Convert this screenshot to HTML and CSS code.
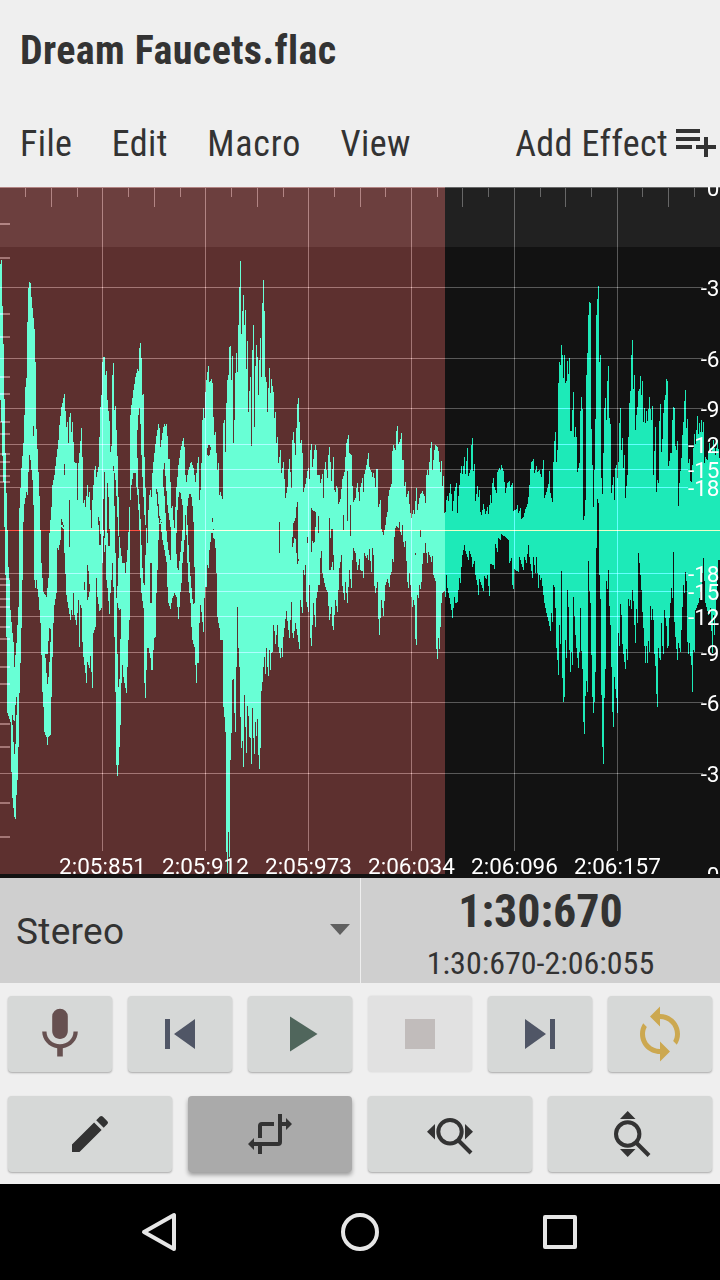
FILE: index.html
```
<!DOCTYPE html>
<html lang="en">
<head>
    <meta charset="UTF-8">
    <meta name="viewport" content="width=device-width, initial-scale=1.0">
    <title>Dream Faucets.flac</title>
    <link rel="stylesheet" href="styles.css">
</head>
<body>

    <header class="top">
        <h1 class="title">Dream Faucets.flac</h1>
        <nav class="menu">
            <button class="menu-item file">File</button>
            <button class="menu-item edit">Edit</button>
            <button class="menu-item macro">Macro</button>
            <button class="menu-item view">View</button>
            <button class="menu-item effect">Add Effect</button>
            <svg class="effect-icon" viewBox="0 0 48 48">
                <path d="M4 12h24v4H4zM4 20h24v4H4zM4 28h16v4H4zM36 28v-8h-4v8h-8v4h8v8h4v-8h8v-4z"/>
            </svg>
        </nav>
    </header>

    <svg class="wave" id="wave" viewBox="0 187 720 691">
        <rect class="ruler" x="0" y="187" width="720" height="60"/>
        <path class="samples" id="samples" fill-rule="evenodd"/>
        <rect class="selection" x="0" y="187" width="445" height="687"/>
        <g id="grid"></g>
        <rect class="zero" x="0" y="530" width="720" height="1"/>
        <g id="labels"></g>
        <rect class="wave-end" x="0" y="874" width="720" height="4"/>
    </svg>

    <section class="info">
        <div class="channel">
            <span>Stereo</span>
            <svg class="caret" viewBox="0 0 20 11"><path d="M0 0h20L10 11z"/></svg>
        </div>
        <div class="position">
            <div class="time">1:30:670</div>
            <div class="range">1:30:670-2:06:055</div>
        </div>
    </section>

    <section class="controls transport">
        <button class="btn record"><svg viewBox="0 0 60 60"><path d="M30 35c4.400 0 7.800-3.600 7.800-8V12.500a7.800 7.800 0 0 0-15.600 0V27c0 4.400 3.400 8 7.800 8zM43.500 27.500c0 7.500-6.300 12.700-13.500 12.700S16.500 35 16.500 27.500h-4.300c0 8.500 6.800 15.500 15 16.700V52.500h5.600V44.200C41 43 47.800 36 47.800 27.500z"/></svg></button>
        <button class="btn skip"><svg viewBox="0 0 60 60"><path d="M15 15h5v30h-5zM24 30l21 15V15z"/></svg></button>
        <button class="btn play"><svg viewBox="0 0 60 60"><path d="M20 12.500v35L47.500 30z"/></svg></button>
        <button class="btn stop" disabled><svg viewBox="0 0 60 60"><path d="M15 15h30v30H15z"/></svg></button>
        <button class="btn skip"><svg viewBox="0 0 60 60"><path d="M15 45l21-15-21-15zM40 15h5v30h-5z"/></svg></button>
        <button class="btn loop"><svg viewBox="0 0 60 60"><path d="M30 10V2.500L20 12.500 30 22.500V15c8.300 0 15 6.700 15 15 0 2.500-.6 4.900-1.800 7L46.800 40.700C48.800 37.600 50 33.900 50 30c0-11-9-20-20-20zM30 45c-8.300 0-15-6.700-15-15 0-2.500.6-4.900 1.800-7L13.200 19.300C11.200 22.400 10 26.100 10 30c0 11 9 20 20 20v7.500L40 47.500 30 37.500z"/></svg></button>
    </section>

    <section class="controls tools">
        <button class="btn"><svg viewBox="0 0 48 48"><path d="M6 34.500V42h7.500L35.600 19.900l-7.500-7.500zM41.400 14.100a2 2 0 0 0 0-2.800L36.700 6.600a2 2 0 0 0-2.800 0l-3.700 3.700 7.500 7.500z"/></svg></button>
        <button class="btn active"><svg viewBox="0 0 48 48"><path d="M12 28V16a4 4 0 0 1 4-4h12v4H16v12zM32 4h4v8h4V8l6 6-6 6v-4h-4v16a4 4 0 0 1-4 4H16v8h-4v-8H8v4l-6-6 6-6v4h24z"/></svg></button>
        <button class="btn"><svg class="zoom-icon" viewBox="0 0 48 48"><circle cx="24" cy="21.700" r="11.700"/><path class="handle" d="M32.500 30.500L45 43"/><path d="M9 14v15.500L1 21.700zM39 14v15.500l8-7.800z"/></svg></button>
        <button class="btn"><svg class="zoom-icon" viewBox="0 0 48 48"><circle cx="21.700" cy="24" r="11.700"/><path class="handle" d="M30.500 33L43 45.500"/><path d="M14 9h15.500L21.700 1zM14 39h15.500l-7.800 8z"/></svg></button>
    </section>

    <footer class="system-bar">
        <svg viewBox="0 0 48 48"><path d="M38 7v34L8 24z"/></svg>
        <svg viewBox="0 0 48 48"><circle cx="24" cy="24" r="17"/></svg>
        <svg viewBox="0 0 48 48"><path d="M9 9h30v30H9z"/></svg>
    </footer>

    <script src="wave.js"></script>
</body>
</html>
```
FILE: styles.css
```
* {
    box-sizing: border-box;
}

body {
    margin: 0;
    width: 720px;
    height: 1280px;
    display: flex;
    flex-direction: column;
    background: #efefef;
    color: #333;
    font-family: Roboto, sans-serif;
    overflow: hidden;
}

button {
    border: none;
    background: none;
    padding: 0;
    color: inherit;
    font-family: inherit;
}

.top {
    height: 187px;
    padding: 0 3px 0 20px;
}

.title {
    margin: 0;
    height: 100px;
    line-height: 101px;
    font-size: 40px;
    font-weight: bold;
    font-stretch: condensed;
    font-variant-ligatures: none;
    letter-spacing: 0.4px;
}

.menu {
    height: 87px;
    display: flex;
    align-items: center;
}

.menu-item {
    font-size: 36px;
    font-stretch: condensed;
    font-variant-ligatures: none;
    letter-spacing: 0.4px;
    margin-right: 39.5px;
    white-space: nowrap;
}

.macro {
    letter-spacing: 0.8px;
}

.effect {
    margin-left: auto;
    margin-right: 4px;
}

.effect-icon {
    width: 48px;
    height: 48px;
    flex: none;
    margin-right: -3px;
    margin-bottom: 5px;
    fill: #333;
}

.wave {
    display: block;
    width: 720px;
    height: 691px;
    flex: none;
    background: #121212;
    isolation: isolate;
    shape-rendering: crispEdges;
}

.ruler {
    fill: #212121;
}

.samples {
    fill: #1deab8;
}

.selection {
    fill: #4b1e1d;
    mix-blend-mode: plus-lighter;
}

.grid-line {
    fill: #464646;
    mix-blend-mode: plus-lighter;
}

.zero {
    fill: #d01e10;
    mix-blend-mode: plus-lighter;
}

.wave-label {
    fill: #fff;
    font-size: 22.5px;
}

.wave-end {
    fill: #121212;
}

.info {
    height: 105px;
    display: flex;
    gap: 1px;
}

.channel {
    width: 360px;
    background: #cfcfcf;
    display: flex;
    align-items: center;
    justify-content: space-between;
    padding: 2px 10px 0 16px;
    font-size: 37px;
    letter-spacing: 0.3px;
}

.caret {
    width: 20px;
    height: 11px;
    fill: #606060;
    margin-top: -4px;
}

.position {
    flex: 1;
    background: #cfcfcf;
    text-align: center;
    font-stretch: condensed;
}

.time {
    font-size: 46px;
    font-weight: bold;
    line-height: 54px;
    padding-top: 6px;
}

.range {
    font-size: 32px;
    line-height: 38px;
    padding-top: 6px;
}

.controls {
    display: flex;
    gap: 16px;
    padding: 13px 8px 0;
}

.transport {
    height: 100px;
}

.tools {
    height: 101px;
}

.btn {
    flex: 1;
    height: 76px;
    border-radius: 4px;
    background: #d6d8d7;
    box-shadow: 0 1px 2px rgba(0, 0, 0, 0.3);
    display: flex;
    align-items: center;
    justify-content: center;
}

.transport svg {
    width: 60px;
    height: 60px;
}

.tools svg {
    width: 48px;
    height: 48px;
    fill: #333;
}

.record {
    fill: #665050;
}

.skip {
    fill: #505666;
}

.play {
    fill: #50665c;
}

.stop {
    background: #e1e1e1;
    fill: #c1bcbb;
    box-shadow: 0 0 2px rgba(0, 0, 0, 0.12);
}

.loop {
    fill: #cca850;
}

.active {
    background: #aaa;
    box-shadow: 0 3px 4px rgba(0, 0, 0, 0.35);
}

.zoom-icon circle,
.handle {
    fill: none;
    stroke: #333;
    stroke-width: 4px;
}

.system-bar {
    flex: 1;
    background: #000;
    display: flex;
    align-items: center;
    justify-content: center;
    gap: 152px;
}

.system-bar svg {
    width: 48px;
    height: 48px;
    fill: none;
    stroke: #e6e6e6;
    stroke-width: 4px;
    stroke-linejoin: round;
}
```
FILE: wave.js
```
// Peaks are "x,y" pairs: x in thirds of a pixel from the block start, y in pixels
const upper = [
    [0, `0,264 3,260 6,306 9,344 12,399 15,453 18,493 21,530 24,567 27,580 30,610 36,633 42,650 43,667 48,643 54,607 57,508
        63,468 69,443 75,387 79,378 81,322 84,288 88,282 92,283 95,297 99,318 102,329 105,362 108,429 111,449 114,472 117,496 120,530
        124,563 130,592 138,597 145,578 148,533 153,507 156,485 162,475 168,457 174,440 178,425 183,407 190,398 193,394 198,427
        202,422 205,443 208,417 211,413 214,432 218,422 223,462 228,463 232,500 235,463 238,453 243,428 246,457 250,503 253,500
        256,507 262,485 265,497 269,492 272,510 275,528 278,500 283,470 286,466 289,477 294,467 298,437 301,407 304,395 307,362
        311,357 314,357 317,375 320,371 323,400 327,421 330,452 334,446 337,375 340,363 343,410 346,406 349,430 352,456 355,497
        358,537 361,548 366,563 372,563 376,573 381,550 384,532 388,507 390,415 394,405 400,390 407,377 412,369 415,371 418,348
        421,343 424,358 427,395 430,394 433,457 436,488 439,528 442,543 445,510 448,495 451,490 454,497 457,473 460,462 463,453
        466,444 470,436 475,424 478,428 481,447 484,440 487,433 490,427 493,424 496,426 499,424 502,436 505,459 508,459 511,482
        514,508 517,506 520,520 523,528 526,507 529,487 532,477 535,465 541,450 547,441 550,438 553,447 556,475 559,482 562,475
        565,470 571,463 574,462 580,468 586,482 589,473 592,463 595,457 598,500 601,490 604,463 607,420 610,408 613,418 616,392
        619,380 622,372 625,366 628,382 634,379 637,383 640,417 643,435 646,432 649,453 652,470 655,463 658,495 661,492 667,499
        670,423 673,420 676,452 679,403 682,380 685,375 688,347 691,346 694,380 697,356 700,443 703,420 706,373 709,353 712,372
        715,325`],
    [220, `58,287 61,261 64,334 67,311 70,295 73,325 76,310 79,369 82,341 85,412 88,391 91,377 94,446 97,350 100,325 103,427
        106,366 109,345 112,357 115,395 118,360 121,338 124,377 127,303 130,280 133,311 136,377 139,382 142,412 145,388 148,368
        151,393 155,379 160,392 163,418 166,412 169,443 172,437 175,463 181,450 184,473 190,462 193,479 196,498 202,487 205,469
        208,459 211,472 214,488 217,440 220,432 223,443 226,455 229,428 232,404 235,398 238,422 241,443 244,440 247,453 250,492
        256,484 262,471 265,468 268,479 271,450 274,444 277,467 283,450 286,445 289,450 292,475 298,475 301,483 307,474 310,498
        313,469 317,462 322,478 325,455 328,447 331,462 334,481 340,457 343,490 346,492 349,486 352,488 355,504 361,499 367,479
        373,472 376,457 379,443 385,435 388,453 394,455 397,486 400,502 406,498 409,488 412,483 418,501 421,487 427,478 430,492
        433,474 439,465 445,453 448,467 454,472 457,477 460,473 463,478 466,487 469,469 472,469 475,507 481,500 484,529 490,535
        496,525 499,517 502,512 505,496 508,490 514,484 517,451 520,445 526,450 529,431 532,426 535,444 541,439 544,433 547,460
        550,460 553,486 556,482 559,497 565,491 568,504 571,513 574,518 580,510 583,514 589,488 592,510 598,498 601,494 607,491
        613,496 616,503 619,475 622,470 625,475 631,448 634,442 637,470 643,450 646,445 652,447 655,451 661,472 664,461 667,486
        670,476 673,513 676,512`],
    [440, `19,500 22,496 25,501 31,484 34,494 37,511 43,491 49,483 52,513 55,496 61,473 64,466 67,474 73,457 76,474 82,448 85,476
        91,470 94,445 97,438 100,471 103,464 106,501 112,486 115,497 118,490 121,512 124,515 130,504 136,514 142,507 145,514
        151,495 154,503 157,483 160,478 163,487 169,493 172,472 178,468 181,470 184,465 190,471 196,493 202,483 208,481 211,487
        217,483 220,511 229,509 232,505 235,513 241,508 244,519 250,517 256,509 262,504 265,497 268,485 271,469 274,462 280,459
        283,473 289,466 292,472 298,470 304,477 310,460 313,498 319,492 325,484 328,471 331,493 337,502 340,462 343,441 346,432
        349,462 352,450 355,383 358,362 361,365 364,345 367,355 370,378 373,355 376,383 379,381 382,361 385,374 388,358 391,431
        394,431 397,410 400,392 403,437 406,427 409,437 412,472 418,463 421,411 424,397 427,409 430,520 433,516 436,500 439,375
        442,353 445,315 448,302 451,303 454,429 457,465 460,507 463,470 466,419 469,315 472,299 475,286 478,362 481,355 484,478
        487,494 490,453 493,408 496,398 499,420 502,381 505,366 508,418 511,424 514,493 520,477 523,500 526,468 529,465 532,478
        535,462 538,423 541,408 544,450 547,438 550,468 553,455 556,498 559,486 562,475 565,437 568,403 571,391 574,355 577,340
        580,389 583,375 586,430 589,415 592,407 595,391 598,389 601,376 604,395 607,381 610,422 613,408 616,423 619,411 622,421
        628,397 634,420 637,406 640,475 646,427 649,492 652,480 655,483 658,421 661,404 664,452 667,439 670,413 673,400 676,395
        679,379 682,381 685,466 688,461 691,453 694,453 697,420 700,407 703,408 706,446 709,450 712,441 715,506 718,483 724,458
        727,435 730,422 733,401 736,390 739,428 742,419 745,463 748,459 751,481 754,482 760,448 763,434 766,444 772,416 775,434
        778,423 781,432 784,420 787,432 790,422 793,463 796,457 802,460 808,443 814,453 820,440 826,455 832,440 838,458`]
];

const lower = [
    [0, `0,400 5,422 8,456 11,482 13,527 15,575 20,637 23,713 30,722 33,772 37,798 42,817 45,819 48,795 51,780 54,747 57,693
        60,663 63,628 66,580 69,522 72,504 78,492 82,495 84,472 87,455 90,460 94,470 97,480 100,505 102,580 107,588 109,580
        115,597 120,623 123,655 126,692 130,707 134,732 138,737 141,745 145,737 150,735 153,697 156,657 160,623 163,605 168,593
        171,548 175,550 178,545 181,540 184,525 190,525 194,553 198,595 203,602 210,620 214,610 218,615 221,593 224,615 230,625
        234,600 238,647 241,605 244,608 247,642 251,657 256,673 259,683 262,662 268,668 271,656 277,688 280,633 285,627 288,578
        293,597 298,611 304,608 306,563 310,530 315,545 318,580 322,588 328,614 331,593 334,580 337,563 341,587 343,637 346,692
        349,765 352,776 355,765 358,747 361,725 363,683 366,665 370,677 376,688 380,693 383,667 385,640 387,620 390,523
        392,500 395,485 400,473 406,473 409,487 412,495 415,510 418,530 421,578 424,593 430,608 432,668 434,683 436,698 439,670
        442,648 446,648 450,658 453,670 458,670 461,650 463,638 466,637 468,593 471,570 474,540 477,523 481,520 484,532 487,540
        493,550 499,562 502,587 506,603 511,609 514,603 518,598 523,593 528,597 531,607 535,619 538,607 541,592 544,583 547,563
        552,540 556,515 559,535 562,563 565,582 571,603 574,627 577,640 583,647 586,665 589,683 592,663 597,663 598,623 601,605
        604,612 607,622 610,632 613,598 617,587 620,587 622,565 625,568 628,550 634,533 638,522 640,530 646,548 649,573 652,617
        658,628 661,640 666,640 669,707 672,717 675,732 678,852 681,873 684,832 687,873 689,857 690,760 693,733 696,680 699,679
        702,713 706,732 709,667 712,607 715,648 718,667`],
    [220, `61,717 64,748 67,741 70,767 73,695 76,727 79,753 82,706 85,716 88,737 91,738 94,764 97,708 100,738 103,754 106,722
        109,736 112,719 115,755 118,769 121,748 124,691 127,682 130,667 133,657 136,674 139,648 142,667 145,676 148,650 151,670
        154,653 157,652 160,625 163,631 166,644 172,625 175,647 181,658 184,648 187,657 190,637 196,619 199,611 205,630 208,638
        214,602 217,633 220,638 226,623 232,635 238,649 241,600 247,613 250,570 253,575 256,565 259,602 265,612 268,585 271,638
        274,646 280,603 286,627 289,598 295,585 298,585 301,558 304,551 307,573 313,583 319,590 322,592 328,620 334,607 337,626
        340,630 346,600 352,612 358,568 364,555 367,586 373,600 376,582 382,603 388,570 394,588 397,560 400,548 406,553 412,570
        418,559 421,570 427,571 430,578 433,553 439,558 442,555 445,560 448,549 454,572 457,548 460,555 463,586 466,593 472,582
        475,619 478,635 484,600 490,616 496,585 502,579 508,587 511,575 514,572 517,559 520,562 523,537 526,528 529,526 535,528
        538,522 541,532 544,535 547,525 550,542 553,547 556,541 559,561 562,582 565,588 568,573 574,597 577,607 580,600 583,605
        586,639 589,645 592,595 595,598 598,585 601,589 604,582 607,564 610,553 613,553 616,543 622,563 625,552 631,557 634,562
        637,556 640,575 646,581 649,649 652,659 655,638 658,649 661,627 664,603 667,593 673,591 676,597`],
    [440, `19,575 22,588 28,598 34,610 37,618 43,597 46,603 52,602 58,578 61,583 64,567 67,555 73,545 76,551 82,557 85,560 88,551
        94,557 97,567 103,561 106,575 112,585 115,595 118,579 124,585 130,591 133,576 139,579 142,575 148,596 151,564 160,565
        163,569 166,544 172,552 175,538 181,540 184,534 196,537 205,540 208,563 214,558 217,585 220,589 223,569 235,572 238,557
        250,570 253,557 259,563 265,545 268,557 277,578 280,557 286,573 289,557 295,588 298,575 301,580 304,578 307,586 313,603
        319,613 325,621 331,631 334,613 337,622 340,585 343,587 346,608 349,648 352,660 355,675 358,625 361,644 364,571 367,678
        370,702 373,697 376,640 379,658 382,590 385,607 388,650 391,672 394,652 397,665 400,597 406,635 409,648 415,668 418,652
        421,608 424,651 427,669 430,722 433,734 436,696 439,681 442,692 445,561 448,591 451,603 454,655 457,697 460,713 463,702
        466,672 469,548 472,499 475,503 478,575 481,599 484,695 487,747 490,764 493,698 496,669 499,581 502,589 505,570 508,606
        511,625 514,667 517,712 520,727 523,677 526,689 529,698 532,713 535,633 538,646 541,604 544,615 547,644 550,654 556,669
        559,649 562,660 565,599 568,606 571,600 574,609 577,590 580,601 583,625 586,643 589,609 592,623 595,553 598,563 601,575
        604,590 607,612 610,628 613,646 616,663 619,646 622,663 625,641 628,652 631,606 634,620 637,609 640,620 643,654 646,666
        649,694 652,707 655,648 658,658 661,660 664,623 667,646 670,654 673,610 679,626 682,648 685,646 688,618 694,588 697,598
        700,552 703,622 706,637 712,660 715,643 721,652 724,630 727,607 730,585 733,593 736,572 739,581 742,642 745,654 748,643
        751,656 754,665 757,692 760,650 763,652 766,610 775,603 784,587 790,558 796,603 805,615 811,608 817,653 820,615 823,635
        829,600 835,560 838,560`]
];

// Gaps inside the trace
const holes = [
    '12,720 13,711 14,729 16,697 17,697 16,734 15,754 14,754 13,730',
    '33,426 34,426 34,436 33,436',
    '45,654 48,654 49,628 51,630 50,655 48,684 47,684 46,662',
    '64,464 65,464 65,475 64,475',
    '61,519 62,519 64,530 61,526',
    '69,500 70,500 70,547 69,547',
    '84,582 85,582 85,590 84,590', '87,565 88,565 90,590 88,600 87,600',
    '98,515 100,523 101,545 99,545 99,530 98,520',
    '104,472 105,472 105,560 103,528',
    '107,483 108,483 109,510 110,546 108,546 107,520',
    '113,462 114,470 116,483 117,508 119,545 117,600 119,611 121,608 120,670 119,688 118,686 117,620 115,530 114,480',
    '139,408 140,408 141,440 142,470 143,483 144,510 146,530 145,580 144,590 142,560 141,530 140,508 139,500 138,477 137,437',
    '150,563 152,563 152,603 150,603',
    '156,488 158,493 159,515 162,523 159,524 157,500',
    '164,456 165,470 166,482 167,500 168,510 171,530 171,562 168,547 166,525 165,500 163,483',
    '178,500 180,490 183,508 183,525 181,547 178,575 176,547 177,520',
    '190,492 192,498 193,513 194,530 195,602 193,605 190,570 188,537 187,513 188,500',
    '207,450 209,444 211,448 209,457 207,455',
    '212,518 213,518 214,540 212,530',
    '279,522 280,522 280,553 279,553',
    '293,528 294,518 295,524 297,502 298,502 298,558 299,560 297,565 296,540 294,538 293,548 292,546',
    '311,505 312,510 316,512 316,524 315,530 314,555 313,530 312,552 311,552',
    '318,516 319,516 319,533 318,533', '307,537 308,537 308,543 307,543',
    '329,518 330,518 330,548 331,529 333,529 334,580 333,560 331,570 329,570',
    '343,515 344,515 344,530 343,530', '347,471 348,471 348,521 347,521', '350,505 351,505 351,536 350,536',
    '420,530 421,530 421,537 420,537', '415,553 416,553 416,555 415,555'
];

// Value for every pixel column, linear between the stored peaks
function columns(blocks) {
    const pts = blocks.flatMap(([start, text]) => text.trim().split(/\s+/).map(p => {
        const [x, y] = p.split(',').map(Number);
        return [start + Math.floor(x / 3), y];
    }));
    const cols = [];
    pts.forEach(([x, y], i) => {
        cols[x] = y;
        const next = pts[i + 1] || [720, y];
        for (let c = x + 1; c < next[0]; c++) {
            cols[c] = Math.round(y + (next[1] - y) * (c - x) / (next[0] - x));
        }
    });
    return cols;
}

const tops = columns(upper);
const bottoms = columns(lower);
let d = '';
for (let x = 0; x < 720; x++) {
    const t = Math.min(tops[x], bottoms[x] - 2);
    d += `M${x} ${t}h1V${bottoms[x]}h-1z`;
}
holes.forEach(h => d += `M${h}z`);
document.getElementById('samples').setAttribute('d', d);

function add(parent, tag, attrs, text) {
    const el = document.createElementNS('http://www.w3.org/2000/svg', tag);
    for (const key in attrs) el.setAttribute(key, attrs[key]);
    if (text) el.textContent = text;
    document.getElementById(parent).appendChild(el);
}

function line(x, y, width, height) {
    add('grid', 'rect', { class: 'grid-line', x, y, width, height });
}

function label(x, y, anchor, text) {
    add('labels', 'text', { class: 'wave-label', x, y, 'text-anchor': anchor }, text);
}

line(0, 187, 720, 1);

// Decibel rows
const levels = { 287: -3, 358: -6, 408: -9, 444: -12, 469: -15, 487: -18, 573: -18, 591: -15, 616: -12, 652: -9, 702: -6, 773: -3 };
for (const y in levels) {
    line(0, y, levels[y] > -10 ? 703 : 688, 1);
    label(719.5, Number(y) + 8.5, 'end', levels[y]);
}
label(719.5, 196, 'end', '0');
label(719.5, 883, 'end', '0');

// Time ruler
const times = ['2:05:851', '2:05:912', '2:05:973', '2:06:034', '2:06:096', '2:06:157'];
times.forEach((t, i) => {
    line(102 + i * 103, 188, 1, 663);
    label(102.5 + i * 103, 873.5, 'middle', t);
});
for (let i = 0; i < 7; i++) {
    line(Math.floor(25.85 + i * 102.85), 188, 1, 9);
    line(Math.floor(51.5 + i * 102.85), 188, 1, 19);
    line(Math.floor(77.3 + i * 102.85), 188, 1, 9);
}

// Second scale on the left edge
[223, 257, 313, 336, 376, 393, 421, 433, 453, 461, 475, 481, 578, 584, 598, 606, 626, 638, 666, 683, 723, 746, 802, 836]
    .forEach(y => line(0, y, 10, 2));
```
